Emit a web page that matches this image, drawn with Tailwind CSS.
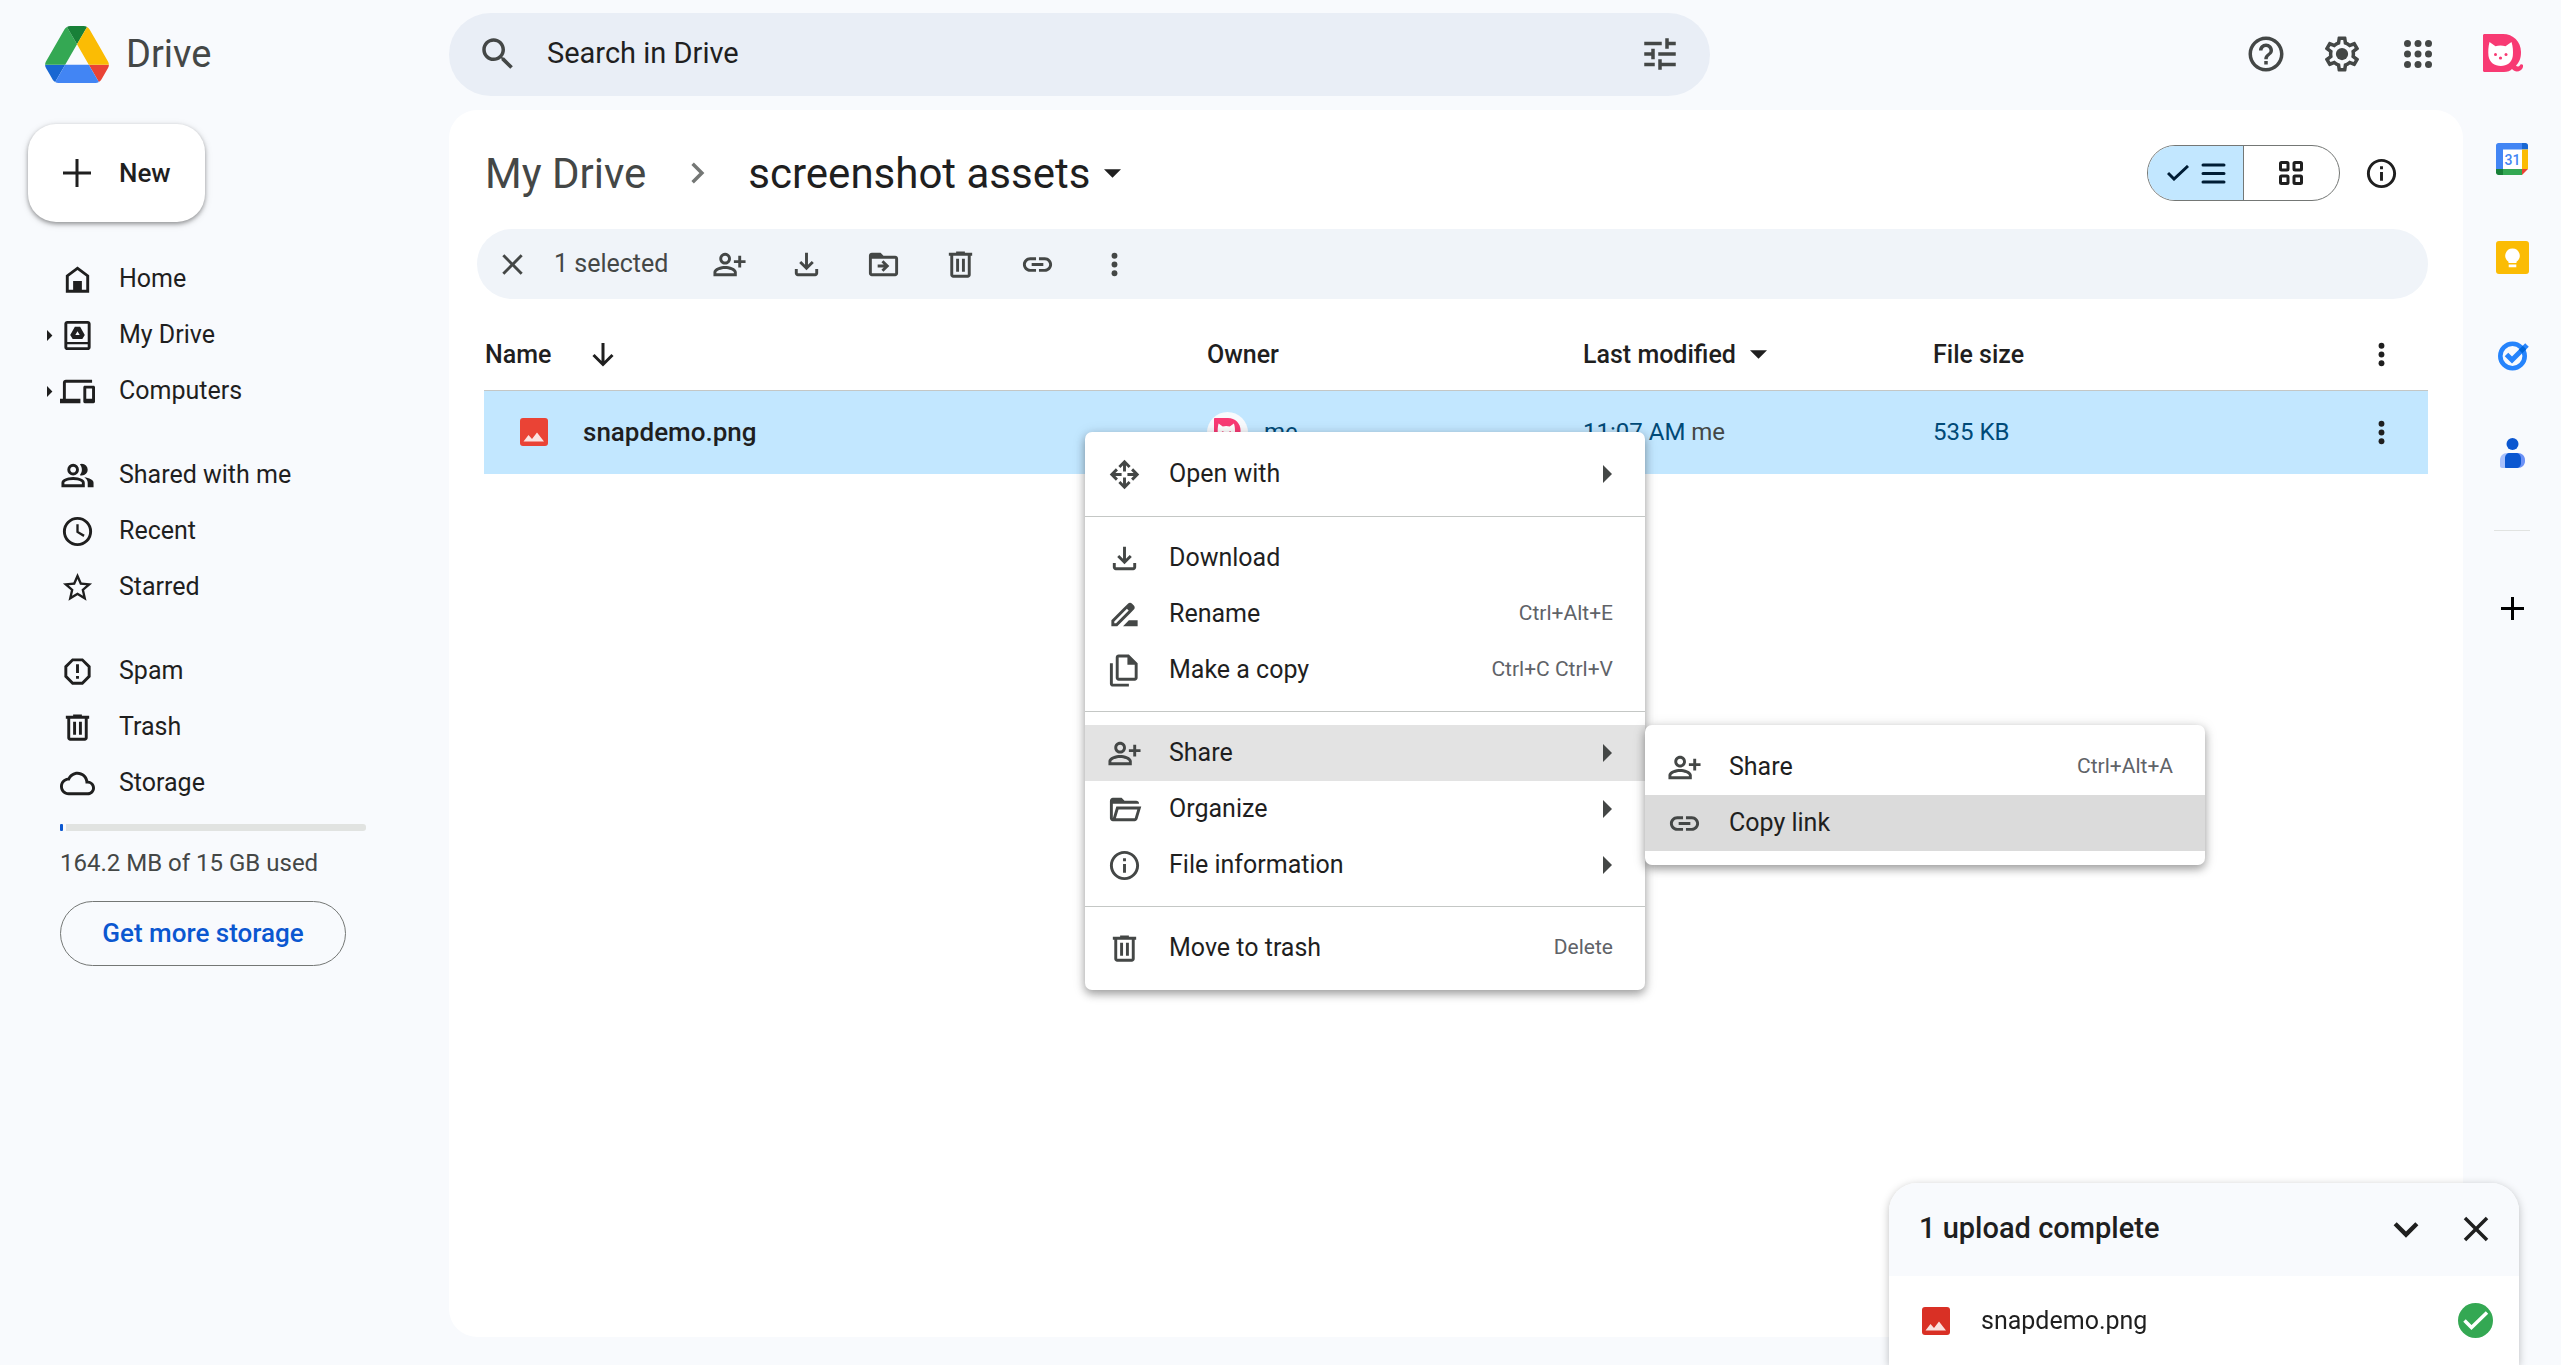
<!DOCTYPE html>
<html lang="en">
<head>
    <meta charset="UTF-8">
    <title>screenshot assets - Google Drive</title>
    <meta name="viewport" content="width=device-width, initial-scale=1">
    <script src="https://cdn.jsdelivr.net/npm/@tailwindcss/browser@4"></script>
</head>
<body class="h-screen flex flex-col overflow-hidden bg-[#f8fafd] font-['Roboto',sans-serif] text-[25px] text-[#1f1f1f]">

    <!-- Shared icons -->
    <svg class="hidden">
        <symbol id="person-add" viewBox="0 0 24 24"><path d="M20 9V6h-2v3h-3v2h3v3h2v-3h3V9h-3zM9 12c2.21 0 4-1.79 4-4s-1.79-4-4-4-4 1.79-4 4 1.79 4 4 4zm0-6c1.1 0 2 .9 2 2s-.9 2-2 2-2-.9-2-2 .9-2 2-2zm0 7c-2.67 0-8 1.34-8 4.2V20h16v-2.8C17 14.34 11.67 13 9 13zm-6 5v-.8C3.22 16.3 6.31 15 9 15c2.7 0 5.8 1.29 6 2.2v.8H3z"/></symbol>
        <symbol id="download" viewBox="0 0 24 24"><path d="M12 16l-5-5 1.4-1.45 2.6 2.6V4h2v8.15l2.6-2.6L17 11l-5 5zm-6 4c-.55 0-1.02-.2-1.41-.59C4.2 19.02 4 18.55 4 18v-3h2v3h12v-3h2v3c0 .55-.2 1.02-.59 1.41-.39.39-.86.59-1.41.59H6z"/></symbol>
        <symbol id="trash" viewBox="0 0 24 24"><path fill-rule="evenodd" d="M15 4V3H9v1H4v2h1v13c0 1.1.9 2 2 2h10c1.1 0 2-.9 2-2V6h1V4h-5zm2 15H7V6h10v13zM9 8h2v9H9zm4 0h2v9h-2z"/></symbol>
        <symbol id="link" viewBox="0 0 24 24"><path d="M17 7h-4v2h4c1.65 0 3 1.35 3 3s-1.35 3-3 3h-4v2h4c2.76 0 5-2.24 5-5s-2.24-5-5-5zm-6 8H7c-1.65 0-3-1.35-3-3s1.35-3 3-3h4V7H7c-2.76 0-5 2.24-5 5s2.24 5 5 5h4v-2zm-3-4h8v2H8z"/></symbol>
        <symbol id="more" viewBox="0 0 24 24"><circle cx="12" cy="6" r="2"/><circle cx="12" cy="12" r="2"/><circle cx="12" cy="18" r="2"/></symbol>
        <symbol id="info" viewBox="0 0 24 24"><path d="M11 7h2v2h-2zm0 4h2v6h-2zm1-9C6.48 2 2 6.48 2 12s4.48 10 10 10 10-4.48 10-10S17.52 2 12 2zm0 18c-4.41 0-8-3.59-8-8s3.59-8 8-8 8 3.59 8 8-3.59 8-8 8z"/></symbol>
        <symbol id="close" viewBox="0 0 24 24"><path d="M19 6.41L17.59 5 12 10.59 6.41 5 5 6.41 10.59 12 5 17.59 6.41 19 12 13.41 17.59 19 19 17.59 13.41 12z"/></symbol>
        <symbol id="image" viewBox="0 0 28 28"><rect width="28" height="28" rx="3"/><path fill="#fff" fill-opacity=".85" d="M3.500 23.500l5-6.500 3.500 4 5-6.500 7 9z"/></symbol>
        <symbol id="caret-right" viewBox="0 0 10 18"><path d="M0 0l9 9-9 9z"/></symbol>
        <symbol id="caret-down" viewBox="0 0 18 9"><path d="M0 0h18L9 9z"/></symbol>
        <symbol id="cat" viewBox="0 0 40 40">
            <path fill="#f83a73" d="M1.500 0H20c10 0 18 7.500 18 18 0 6-1.500 10-5 13.500.8 1.300 3.500 1.200 4-.6.3-1.100 3.500-.9 3.200 1-.7 5.500-7.700 7.500-11.200 3.200-1.500 1.900-4.500 2.900-8 2.900H1.500C.6 38 0 37.400 0 36.500v-35C0 .6.600 0 1.500 0z"/>
            <path fill="#fff" d="M6.500 8l6 4.200c3-1.100 6.800-1.100 10 0L28.500 8c1.500 4.500 1.800 9.500 1.300 14-.8 6.500-5.800 10-12 10S6.500 28.500 5.500 22C5 17.500 5.300 12.500 6.500 8z"/>
            <g fill="#f83a73"><circle cx="12.500" cy="20.500" r="1.500"/><circle cx="23" cy="20.500" r="1.500"/><circle cx="17.500" cy="24" r="1.600"/></g>
        </symbol>
    </svg>

    <header class="h-[110px] shrink-0 flex items-center pr-[38px] pb-0.5">
        <a href="#" class="w-[449px] shrink-0 flex items-center gap-[17px] pl-[45px] text-[38px] text-[#444746]">
            <svg class="w-16 h-[57px]" viewBox="0 0 87.3 78">
                <path fill="#1967d2" d="m6.600 66.850 3.850 6.650c.8 1.400 1.950 2.500 3.300 3.300l13.750-23.800h-27.500c0 1.550.4 3.100 1.200 4.500z"/>
                <path fill="#34a853" d="m43.650 25-13.750-23.800c-1.350.8-2.500 1.900-3.300 3.300l-25.400 44a9.060 9.060 0 0 0-1.200 4.500h27.500z"/>
                <path fill="#ea4335" d="m73.550 76.800c1.350-.8 2.500-1.900 3.300-3.300l1.600-2.750 7.650-13.250c.8-1.400 1.200-2.950 1.200-4.500h-27.500z"/>
                <path fill="#188038" d="m43.650 25 13.750-23.800c-1.350-.8-2.900-1.200-4.500-1.200h-18.500c-1.600 0-3.150.45-4.500 1.200z"/>
                <path fill="#4285f4" d="m59.800 53h-32.300l-13.750 23.800c1.350.8 2.900 1.200 4.500 1.200h50.800c1.600 0 3.150-.45 4.500-1.200z"/>
                <path fill="#fbbc04" d="m73.400 26.500-12.700-22c-.8-1.400-1.950-2.500-3.300-3.300l-13.750 23.800 16.150 28h27.450c0-1.550-.4-3.100-1.200-4.500z"/>
            </svg>
            Drive
        </a>
        <form class="w-[1261px] h-[83px] flex items-center gap-7 rounded-full bg-[#e9eef6] pl-7 pr-[29px] text-[#444746]">
            <svg class="size-[42px] shrink-0 fill-current" viewBox="0 0 24 24"><path d="M15.500 14h-.79l-.28-.27C15.410 12.590 16 11.110 16 9.500 16 5.910 13.090 3 9.500 3S3 5.910 3 9.500 5.910 16 9.500 16c1.610 0 3.090-.59 4.230-1.570l.27.280v.790l5 4.990L20.490 19l-4.990-5zm-6 0C7.010 14 5 11.990 5 9.500S7.010 5 9.500 5 14 7.010 14 9.500 11.990 14 9.500 14z"/></svg>
            <input type="search" aria-label="Search in Drive" placeholder="Search in Drive" class="grow min-w-0 bg-transparent text-[29px] outline-none placeholder:text-[#1f1f1f]">
            <button type="button" aria-label="Advanced search">
                <svg class="size-[42px] fill-current" viewBox="0 0 24 24"><path d="M3 17v2h6v-2H3zM3 5v2h10V5H3zm10 16v-2h8v-2h-8v-2h-2v6h2zM7 9v2H3v2h4v2h2V9H7zm14 4v-2H11v2h10zm-6-4h2V7h4V5h-4V3h-2v6z"/></svg>
            </button>
        </form>
        <div class="ml-auto flex items-center gap-[34px] text-[#444746]">
            <button aria-label="Support">
                <svg class="size-[42px] fill-current" viewBox="0 0 24 24"><path d="M11 18h2v-2h-2v2zm1-16C6.480 2 2 6.480 2 12s4.480 10 10 10 10-4.480 10-10S17.520 2 12 2zm0 18c-4.410 0-8-3.590-8-8s3.590-8 8-8 8 3.590 8 8-3.590 8-8 8zm0-14c-2.210 0-4 1.790-4 4h2c0-1.100.9-2 2-2s2 .9 2 2c0 2-3 1.750-3 5h2c0-2.250 3-2.500 3-5 0-2.210-1.790-4-4-4z"/></svg>
            </button>
            <button aria-label="Settings">
                <svg class="size-[42px] fill-current" viewBox="0 0 24 24"><path d="M19.43 12.98c.04-.32.07-.64.07-.98 0-.34-.03-.66-.07-.98l2.11-1.65c.19-.15.24-.42.12-.64l-2-3.46c-.09-.16-.26-.25-.44-.25-.06 0-.12.01-.17.03l-2.49 1c-.52-.4-1.08-.73-1.69-.98l-.38-2.65C14.46 2.18 14.25 2 14 2h-4c-.25 0-.46.18-.49.42l-.38 2.65c-.61.25-1.17.59-1.69.98l-2.49-1c-.06-.02-.12-.03-.18-.03-.17 0-.34.09-.43.25l-2 3.46c-.13.22-.07.49.12.64l2.11 1.65c-.04.32-.07.65-.07.98 0 .33.03.66.07.98l-2.11 1.65c-.19.15-.24.42-.12.64l2 3.46c.09.16.26.25.44.25.06 0 .12-.01.17-.03l2.49-1c.52.4 1.08.73 1.69.98l.38 2.65c.03.24.24.42.49.42h4c.25 0 .46-.18.49-.42l.38-2.65c.61-.25 1.17-.59 1.69-.98l2.49 1c.06.02.12.03.18.03.17 0 .34-.09.43-.25l2-3.46c.12-.22.07-.49-.12-.64l-2.11-1.65zm-1.98-1.71c.04.31.05.52.05.73 0 .21-.02.43-.05.73l-.14 1.13.89.7 1.08.84-.7 1.21-1.27-.51-1.04-.42-.9.68c-.43.32-.84.56-1.25.73l-1.06.43-.16 1.13-.2 1.35h-1.4l-.19-1.35-.16-1.13-1.06-.43c-.43-.18-.83-.41-1.23-.71l-.91-.7-1.06.43-1.27.51-.7-1.21 1.08-.84.89-.7-.14-1.13c-.03-.31-.05-.54-.05-.74s.02-.43.05-.73l.14-1.13-.89-.7-1.08-.84.7-1.21 1.27.51 1.04.42.9-.68c.43-.32.84-.56 1.25-.73l1.06-.43.16-1.13.2-1.35h1.39l.19 1.35.16 1.13 1.06.43c.43.18.83.41 1.23.71l.91.7 1.06-.43 1.27-.51.7 1.21-1.07.85-.89.7.14 1.13z"/><circle cx="12" cy="12" r="3.500"/></svg>
            </button>
            <button aria-label="Google apps">
                <svg class="size-[42px] fill-current" viewBox="0 0 24 24"><circle cx="6" cy="6" r="2"/><circle cx="12" cy="6" r="2"/><circle cx="18" cy="6" r="2"/><circle cx="6" cy="12" r="2"/><circle cx="12" cy="12" r="2"/><circle cx="18" cy="12" r="2"/><circle cx="6" cy="18" r="2"/><circle cx="12" cy="18" r="2"/><circle cx="18" cy="18" r="2"/></svg>
            </button>
            <button aria-label="Account" class="pl-2.5">
                <svg class="size-10"><use href="#cat"/></svg>
            </button>
        </div>
    </header>

    <div class="grow min-h-0 flex">
        <aside class="w-[449px] shrink-0 pt-3.5">
            <button class="ml-7 h-[98px] w-[177px] flex items-center gap-7 rounded-[28px] bg-white pl-[35px] text-[26px] font-medium shadow-[0_2px_4px_rgba(0,0,0,0.35),0_2px_8px_rgba(0,0,0,0.12)]">
                <svg class="size-7 fill-current" viewBox="0 0 28 28"><path d="M12.500 0h3v12.500H28v3H15.500V28h-3V15.500H0v-3h12.500z"/></svg>
                New
            </button>
            <nav class="mt-[29px] flex flex-col gap-7">
                <ul>
                    <li><a href="#" class="h-14 flex items-center gap-6 pl-[60px]">
                        <svg class="size-[35px] fill-current" viewBox="0 0 24 24"><path fill-rule="evenodd" d="M4 21V9l8-6 8 6v12zM6 10v9h3v-6h6v6h3v-9l-6-4.500z"/></svg>
                        Home</a></li>
                    <li><a href="#" class="h-14 flex items-center pl-[47px]">
                        <svg class="w-1.5 h-[11px] fill-current mr-[7px]"><use href="#caret-right"/></svg>
                        <svg class="size-[35px] fill-current mr-6" viewBox="0 0 24 24"><path fill-rule="evenodd" d="M5 2h14c1.100 0 2 .9 2 2v16c0 1.100-.9 2-2 2H5c-1.100 0-2-.9-2-2V4c0-1.100.9-2 2-2zm0 2v12.500h14V4zm0 14v2h14v-2z"/><path fill-rule="evenodd" d="M10.200 6h3.600l3.200 5.700-1.700 2.700H8.700L7 11.700zM12 9l-1.500 2.700h3z"/></svg>
                        My Drive</a></li>
                    <li><a href="#" class="h-14 flex items-center pl-[47px]">
                        <svg class="w-1.5 h-[11px] fill-current mr-[7px]"><use href="#caret-right"/></svg>
                        <svg class="size-[35px] fill-current mr-6" viewBox="0 0 24 24"><path d="M4 6h18V4H4c-1.100 0-2 .9-2 2v11H0v3h14v-3H4V6zm19 2h-6c-.55 0-1 .45-1 1v10c0 .55.45 1 1 1h6c.55 0 1-.45 1-1V9c0-.55-.45-1-1-1zm-1 9h-4v-7h4v7z"/></svg>
                        Computers</a></li>
                </ul>
                <ul>
                    <li><a href="#" class="h-14 flex items-center gap-6 pl-[60px]">
                        <svg class="size-[35px] fill-current" viewBox="0 0 24 24"><path d="M1 20v-2.800q0-.85.438-1.563T2.600 14.550q1.550-.775 3.150-1.162T9 13t3.250.388 3.150 1.162q.725.375 1.163 1.088T17 17.200V20zm18 0v-3q0-1.100-.612-2.113T16.650 13.150q1.275.15 2.400.513t2.100.887q.9.500 1.375 1.112T23 17v3zM9 12q-1.650 0-2.825-1.175T5 8t1.175-2.825T9 4t2.825 1.175T13 8t-1.175 2.825T9 12m10-4q0 1.650-1.175 2.825T15 12q-.275 0-.7-.062t-.7-.138q.675-.8 1.038-1.775T15 8t-.362-2.025T13.600 4.200q.35-.125.7-.163T15 4q1.650 0 2.825 1.175T19 8M3 18h12v-.8q0-.275-.137-.5t-.363-.35q-1.350-.675-2.725-1.012T9 15t-2.775.338T3.500 16.350q-.225.125-.362.350T3 17.200zm6-8q.825 0 1.413-.587T11 8t-.587-1.412T9 6t-1.412.588T7 8t.588 1.413T9 10"/></svg>
                        Shared with me</a></li>
                    <li><a href="#" class="h-14 flex items-center gap-6 pl-[60px]">
                        <svg class="size-[35px] fill-none stroke-current stroke-2" viewBox="0 0 24 24"><circle cx="12" cy="12" r="9"/><path stroke-width="1.600" d="M12 7v5.300l4.500 2.700"/></svg>
                        Recent</a></li>
                    <li><a href="#" class="h-14 flex items-center gap-6 pl-[60px]">
                        <svg class="size-[35px] fill-current" viewBox="0 0 24 24"><path d="M22 9.240l-7.190-.62L12 2 9.190 8.630 2 9.240l5.460 4.730L5.820 21 12 17.270 18.180 21l-1.630-7.030L22 9.240zM12 15.400l-3.760 2.270 1-4.280-3.320-2.880 4.380-.38L12 6.100l1.710 4.040 4.380.38-3.320 2.880 1 4.280L12 15.400z"/></svg>
                        Starred</a></li>
                </ul>
                <ul>
                    <li><a href="#" class="h-14 flex items-center gap-6 pl-[60px]">
                        <svg class="size-[35px] fill-current" viewBox="0 0 24 24"><path d="M8.700 4h6.600L20 8.700v6.600L15.300 20H8.700L4 15.300V8.700z" fill="none" stroke="currentColor" stroke-width="2"/><path d="M11 7h2v6h-2zm0 8h2v2h-2z"/></svg>
                        Spam</a></li>
                    <li><a href="#" class="h-14 flex items-center gap-6 pl-[60px]">
                        <svg class="size-[35px] fill-current"><use href="#trash"/></svg>
                        Trash</a></li>
                    <li><a href="#" class="h-14 flex items-center gap-6 pl-[60px]">
                        <svg class="size-[35px] fill-current" viewBox="0 0 24 24"><path d="M19.350 10.040C18.670 6.590 15.640 4 12 4 9.110 4 6.600 5.640 5.350 8.040 2.340 8.360 0 10.910 0 14c0 3.310 2.690 6 6 6h13c2.760 0 5-2.240 5-5 0-2.640-2.050-4.780-4.650-4.960zM19 18H6c-2.210 0-4-1.790-4-4s1.790-4 4-4h.710C7.370 7.690 9.480 6 12 6c3.040 0 5.500 2.460 5.500 5.500v.5H19c1.660 0 3 1.340 3 3s-1.340 3-3 3z"/></svg>
                        Storage</a></li>
                </ul>
            </nav>
            <div class="ml-[60px] mt-[13px] w-[306px]">
                <div class="h-[7px] flex gap-[3px]">
                    <div class="w-[3px] bg-[#0b57d0] rounded-[1px]"></div>
                    <div class="grow bg-[#e1e3e1] rounded-r-[3px]"></div>
                </div>
                <p class="mt-3.5 text-[24px] leading-9 text-[#444746]">164.2 MB of 15 GB used</p>
                <button class="mt-5 h-[65px] w-[286px] rounded-full border border-[#747775] text-[26px] font-medium text-[#0b57d0]">Get more storage</button>
            </div>
        </aside>

        <main class="grow min-w-0 mb-7 rounded-[28px] bg-white pl-7 pr-[35px] pt-[35px]">
            <div class="h-14 flex items-center pl-2">
                <a href="#" class="text-[42px] text-[#444746]">My Drive</a>
                <svg class="size-[42px] mx-[30px] fill-none stroke-[#747775] stroke-2" viewBox="0 0 24 24"><path d="M9.500 6.700l5.300 5.300-5.300 5.300"/></svg>
                <button class="flex items-center gap-3.5 text-[42px]">
                    screenshot assets
                    <svg class="w-[17px] h-[9px] fill-current"><use href="#caret-down"/></svg>
                </button>
                <div class="ml-auto flex items-center pr-[29px]">
                    <div class="w-[193px] h-14 grid grid-cols-2 rounded-full border border-[#747775] overflow-hidden">
                        <button aria-label="List layout" class="flex items-center justify-center gap-3 bg-[#c2e7ff] border-r border-[#747775] pl-0.5 text-[#001d35]">
                            <svg class="w-[22px] h-4 fill-none stroke-current stroke-[3px]" viewBox="0 0 22 16"><path d="M1 8l6 6L21 1"/></svg>
                            <svg class="w-[25px] h-[21px] fill-none stroke-current stroke-[3px]" viewBox="0 0 25 21"><path stroke-linecap="round" d="M2 2h21M2 10.500h21M2 19h21"/></svg>
                        </button>
                        <button aria-label="Grid layout" class="flex items-center justify-center">
                            <svg class="size-6 fill-none stroke-current stroke-[3px]" viewBox="0 0 24 24"><rect x="1.500" y="1.500" width="7.500" height="7.500" rx="1"/><rect x="15" y="1.500" width="7.500" height="7.500" rx="1"/><rect x="1.500" y="15" width="7.500" height="7.500" rx="1"/><rect x="15" y="15" width="7.500" height="7.500" rx="1"/></svg>
                        </button>
                    </div>
                    <button aria-label="View details" class="ml-6"><svg class="size-[35px] fill-current"><use href="#info"/></svg></button>
                </div>
            </div>

            <div class="mt-7 h-[70px] flex items-center rounded-full bg-[#f0f4f9] pl-[18px] text-[#444746]">
                <button aria-label="Clear selection"><svg class="size-[35px] fill-current"><use href="#close"/></svg></button>
                <span class="ml-6 mr-11">1 selected</span>
                <div class="flex gap-[42px]">
                    <button aria-label="Share"><svg class="size-[35px] fill-current"><use href="#person-add"/></svg></button>
                    <button aria-label="Download"><svg class="size-[35px] fill-current"><use href="#download"/></svg></button>
                    <button aria-label="Move"><svg class="size-[35px] fill-current" viewBox="0 0 24 24"><path fill-rule="evenodd" d="M20 6h-8l-2-2H4c-1.100 0-1.990.9-1.990 2L2 18c0 1.100.9 2 2 2h16c1.100 0 2-.9 2-2V8c0-1.100-.9-2-2-2zm0 12H4V8h16v10zM12.160 12H8v2h4.160l-1.590 1.590L11.990 17 16 13.010 11.990 9l-1.410 1.410z"/></svg></button>
                    <button aria-label="Move to trash"><svg class="size-[35px] fill-current"><use href="#trash"/></svg></button>
                    <button aria-label="Copy link"><svg class="size-[35px] fill-current"><use href="#link"/></svg></button>
                    <button aria-label="More actions"><svg class="size-[35px] fill-current"><use href="#more"/></svg></button>
                </div>
            </div>

            <div class="mt-[21px] pl-[7px]">
                <table class="w-full table-fixed border-collapse text-left">
                    <thead>
                        <tr class="h-[70px] border-b border-[#c4c7c5]">
                            <th class="pl-px font-medium">
                                <div class="flex items-center gap-10">Name
                                    <svg class="w-6 h-[25px] fill-none stroke-current stroke-[3px]" viewBox="0 0 24 25"><path d="M12 1v21M2.500 13l9.500 9.500 9.500-9.500"/></svg>
                                </div>
                            </th>
                            <th class="w-[376px] font-medium">Owner</th>
                            <th class="w-[350px] font-medium">
                                <div class="flex items-center gap-3.5">Last modified <svg class="w-[17px] h-[9px] fill-current"><use href="#caret-down"/></svg></div>
                            </th>
                            <th class="w-[414px] font-medium">File size</th>
                            <th class="w-[81px]"><button aria-label="Column options" class="block ml-[17px]"><svg class="size-[35px] fill-current"><use href="#more"/></svg></button></th>
                        </tr>
                    </thead>
                    <tbody>
                        <tr class="h-[84px] bg-[#c2e7ff] text-[24px] text-[#004a77]">
                            <td class="pl-9">
                                <div class="flex items-center gap-[35px] text-[26px] font-medium text-[#1f1f1f]">
                                    <svg class="size-7 fill-[#ea4335]"><use href="#image"/></svg>
                                    snapdemo.png
                                </div>
                            </td>
                            <td>
                                <div class="flex items-center gap-4">
                                    <span class="size-[41px] flex items-center justify-center rounded-full bg-[#f8fafd]"><svg class="size-7"><use href="#cat"/></svg></span>
                                    me
                                </div>
                            </td>
                            <td>11:07 AM <span class="text-[#444746]">me</span></td>
                            <td>535 KB</td>
                            <td class="text-[#1f1f1f]"><button aria-label="More actions" class="block ml-[17px]"><svg class="size-[35px] fill-current"><use href="#more"/></svg></button></td>
                        </tr>
                    </tbody>
                </table>
            </div>
        </main>

        <!-- Side panel -->
        <aside class="w-[98px] shrink-0 flex flex-col items-center pt-8">
            <div class="flex flex-col gap-[63px]">
                <a href="#" aria-label="Calendar">
                    <svg class="size-[35px]" viewBox="0 0 35 35">
                        <path fill="#fff" d="M7 7h20v20H7z"/>
                        <path fill="#4285f4" d="M3.500 1H27v6.500H8V27H1V3.500C1 2.100 2.100 1 3.500 1z"/>
                        <path fill="#1967d2" d="M27 1h3.500C32 1 33 2.100 33 3.500v4h-6z"/>
                        <path fill="#fbbc04" d="M27 7.500h6V27h-6z"/>
                        <path fill="#34a853" d="M8 27h19v6H8z"/>
                        <path fill="#188038" d="M1 27h7v6H3.500C2.100 33 1 31.900 1 30.500z"/>
                        <path fill="#ea4335" d="M27 27h6l-6 6z"/>
                        <text x="17.500" y="22.500" text-anchor="middle" font-size="14" font-weight="500" fill="#4285f4">31</text>
                    </svg>
                </a>
                <a href="#" aria-label="Keep">
                    <svg class="size-[35px]" viewBox="0 0 35 35"><rect x="1" y="1" width="33" height="33" rx="3" fill="#fbbc04"/><path fill="#fff" d="M17.500 8.500a7.200 7.200 0 0 1 4 13.200v1.300h-8v-1.300a7.200 7.200 0 0 1 4-13.200zM13.700 24.500h7.600v2.700h-7.600z"/></svg>
                </a>
                <a href="#" aria-label="Tasks">
                    <svg class="size-[35px] fill-none" viewBox="0 0 35 35"><circle cx="17.500" cy="18" r="12.200" stroke="#2684fc" stroke-width="4.600"/><path stroke="#2684fc" stroke-width="5" d="M11.500 16.500l5.500 5.500L32 7"/><path stroke="#0066da" stroke-width="5" d="M25.500 13.500l4-4"/></svg>
                </a>
                <a href="#" aria-label="Contacts">
                    <svg class="size-[35px]" viewBox="0 0 35 35"><circle cx="17.500" cy="8" r="6" fill="#0b57d0"/><path fill="#a8c0fb" d="M12 17h6v15H7c-1.100 0-2-1-2-2v-6c0-4 3-7 7-7z"/><path fill="#6b91f7" d="M18 17h5c4 0 7 3 7 7v1c0 4-3 7-7 7h-5z"/><path fill="#0b57d0" d="M15 17h6c3 0 5 2.500 5 6v4c0 3-2 5-5 5H11c-.6 0-1-.5-1-1V22c0-3 2-5 5-5z"/></svg>
                </a>
            </div>
            <hr class="mt-[59px] w-9 border-[#e1e3e1]">
            <button aria-label="Get add-ons" class="mt-[60px] text-black"><svg class="size-[35px] fill-current" viewBox="0 0 35 35"><path d="M16 6h3v10h10v3H19v10h-3V19H6v-3h10z"/></svg></button>
        </aside>
    </div>

    <!-- Context menu -->
    <ul class="absolute left-[1085px] top-[432px] w-[560px] py-3.5 rounded-[7px] bg-white text-[#444746] shadow-[0_4px_9px_rgba(0,0,0,0.3),0_2px_14px_rgba(0,0,0,0.15)]">
        <li><button class="w-full h-14 flex items-center pl-[22px] pr-8">
            <svg class="size-[35px] mr-[27px] fill-none stroke-current stroke-2" viewBox="0 0 24 24"><path d="M12 3.500V10M8.500 6.800L12 3.300l3.500 3.500M12 20.500V14M8.500 17.200l3.500 3.500 3.500-3.500M3.500 12H10M6.800 8.500L3.300 12l3.500 3.500M20.500 12H14M17.200 8.500l3.500 3.500-3.500 3.500"/></svg>
            <span class="text-[#1f1f1f]">Open with</span>
            <svg class="w-[10px] h-[18px] ml-auto fill-current"><use href="#caret-right"/></svg>
        </button></li>
        <li role="separator" class="mt-3.5 mb-[13px] border-t border-[#c4c7c5]"></li>
        <li><button class="w-full h-14 flex items-center pl-[22px] pr-8">
            <svg class="size-[35px] mr-[27px] fill-current"><use href="#download"/></svg>
            <span class="text-[#1f1f1f]">Download</span>
        </button></li>
        <li><button class="w-full h-14 flex items-center pl-[22px] pr-8">
            <svg class="size-[35px] mr-[27px] fill-current" viewBox="0 0 24 24"><path d="M18.410 5.800L17.200 4.590c-.78-.78-2.050-.78-2.830 0l-2.680 2.680L3 15.960V20h4.040l8.740-8.740 2.630-2.630c.79-.78.79-2.050 0-2.830zM6.210 18H5v-1.210l8.660-8.660 1.210 1.210L6.210 18zM11 20l4-4h6v4H11z"/></svg>
            <span class="text-[#1f1f1f]">Rename</span>
            <kbd class="ml-auto font-['Roboto',sans-serif] text-[21px] text-[#5f6368]">Ctrl+Alt+E</kbd>
        </button></li>
        <li><button class="w-full h-14 flex items-center pl-[22px] pr-8">
            <svg class="size-[35px] mr-[27px] fill-current" viewBox="0 0 24 24"><path fill-rule="evenodd" d="M4 7H2v14c0 1.100.9 2 2 2h11v-2H4zM8 1h7l6 6v10c0 1.100-.9 2-2 2H8c-1.100 0-2-.9-2-2V3c0-1.100.9-2 2-2zM8 3v14h11V8h-5V3z"/></svg>
            <span class="text-[#1f1f1f]">Make a copy</span>
            <kbd class="ml-auto font-['Roboto',sans-serif] text-[21px] text-[#5f6368]">Ctrl+C Ctrl+V</kbd>
        </button></li>
        <li role="separator" class="mt-[13px] mb-[13px] border-t border-[#c4c7c5]"></li>
        <li class="relative"><button class="w-full h-14 flex items-center bg-[#e3e3e3] pl-[22px] pr-8">
            <svg class="size-[35px] mr-[27px] fill-current"><use href="#person-add"/></svg>
            <span class="text-[#1f1f1f]">Share</span>
            <svg class="w-[10px] h-[18px] ml-auto fill-current"><use href="#caret-right"/></svg>
        </button>
            <ul class="absolute left-full top-0 w-full py-3.5 rounded-[7px] bg-white shadow-[0_4px_9px_rgba(0,0,0,0.3),0_2px_14px_rgba(0,0,0,0.15)]">
                <li><button class="w-full h-14 flex items-center pl-[22px] pr-8">
                    <svg class="size-[35px] mr-[27px] fill-current"><use href="#person-add"/></svg>
                    <span class="text-[#1f1f1f]">Share</span>
                    <kbd class="ml-auto font-['Roboto',sans-serif] text-[21px] text-[#5f6368]">Ctrl+Alt+A</kbd>
                </button></li>
                <li><button class="w-full h-14 flex items-center bg-[#dbdbdb] pl-[22px] pr-8">
                    <svg class="size-[35px] mr-[27px] fill-current"><use href="#link"/></svg>
                    <span class="text-[#1f1f1f]">Copy link</span>
                </button></li>
            </ul>
        </li>
        <li><button class="w-full h-14 flex items-center pl-[22px] pr-8">
            <svg class="size-[35px] mr-[27px] fill-current" viewBox="0 0 24 24"><path d="M4 20q-.825 0-1.412-.587T2 18V6q0-.825.588-1.412T4 4h6l2 2h8q.825 0 1.413.588T22 8H4v10l2.400-8h17.100l-2.575 8.575q-.2.650-.737 1.038T19 20zm2.100-2H19l1.800-6H7.900z"/></svg>
            <span class="text-[#1f1f1f]">Organize</span>
            <svg class="w-[10px] h-[18px] ml-auto fill-current"><use href="#caret-right"/></svg>
        </button></li>
        <li><button class="w-full h-14 flex items-center pl-[22px] pr-8">
            <svg class="size-[35px] mr-[27px] fill-current"><use href="#info"/></svg>
            <span class="text-[#1f1f1f]">File information</span>
            <svg class="w-[10px] h-[18px] ml-auto fill-current"><use href="#caret-right"/></svg>
        </button></li>
        <li role="separator" class="mt-[13px] mb-[13px] border-t border-[#c4c7c5]"></li>
        <li><button class="w-full h-14 flex items-center pl-[22px] pr-8">
            <svg class="size-[35px] mr-[27px] fill-current"><use href="#trash"/></svg>
            <span class="text-[#1f1f1f]">Move to trash</span>
            <kbd class="ml-auto font-['Roboto',sans-serif] text-[21px] text-[#5f6368]">Delete</kbd>
        </button></li>
    </ul>

    <!-- Upload status -->
    <section class="fixed right-[42px] bottom-0 w-[630px] rounded-t-[28px] overflow-hidden bg-white shadow-[0_2px_8px_rgba(0,0,0,0.25)]">
        <div class="h-[93px] flex items-center bg-[#f8fafd] pl-[30px] pr-[22px] pb-0.5">
            <h2 class="text-[29px] font-medium">1 upload complete</h2>
            <button aria-label="Minimize" class="ml-auto"><svg class="size-[42px] fill-none stroke-current stroke-[2.500px]" viewBox="0 0 24 24"><path d="M5.800 9l6.200 6.200L18.200 9"/></svg></button>
            <button aria-label="Close" class="ml-7"><svg class="size-[42px] fill-current"><use href="#close"/></svg></button>
        </div>
        <div class="h-[89px] flex items-center pl-[33px] pr-[26px]">
            <svg class="size-7 fill-[#d93025]"><use href="#image"/></svg>
            <span class="ml-[31px]">snapdemo.png</span>
            <svg class="size-[35px] ml-auto" viewBox="0 0 35 35"><circle cx="17.500" cy="17.500" r="17.500" fill="#34a853"/><path fill="none" stroke="#fff" stroke-width="3.500" d="M6.500 17.500l7 7L29 9.500"/></svg>
        </div>
    </section>
</body>
</html>
